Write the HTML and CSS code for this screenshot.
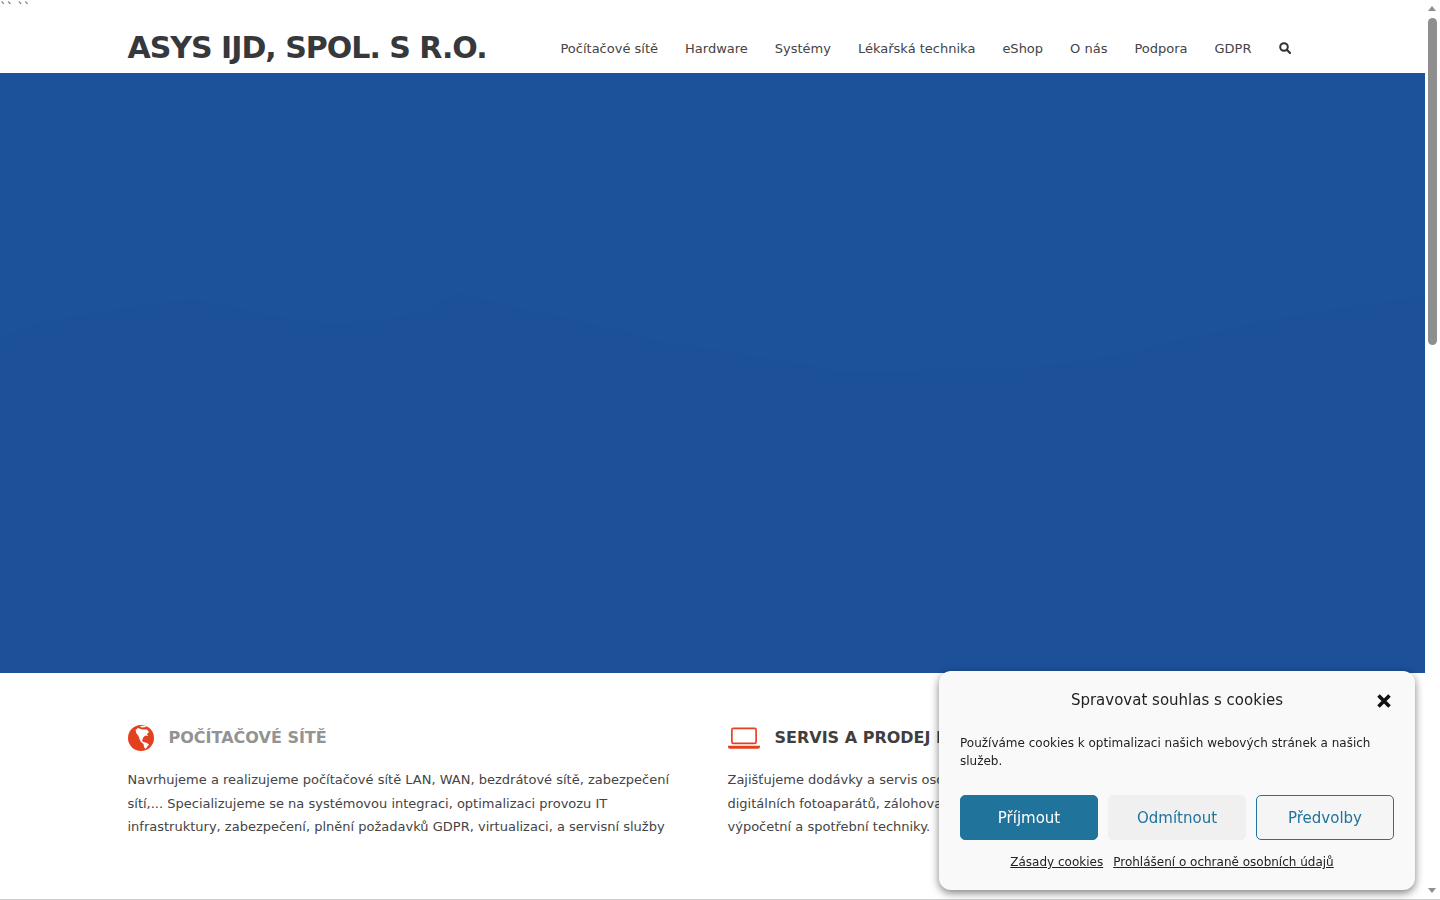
FILE: index.html
```html
<!DOCTYPE html>
<html lang="cs">
<head>
  <meta charset="UTF-8" />
  <title>ASYS IJD, spol. s r.o.</title>
  <link rel="stylesheet" href="styles.css">
</head>
<body>
<div class="page">
  <div class="stray">`` ``</div>
  <header class="site-header">
    <div class="header-inner">
      <a class="brand" href="#">ASYS IJD, SPOL. S R.O.</a>
      <nav class="main-nav">
        <a href="#">Počítačové sítě</a>
        <a href="#">Hardware</a>
        <a href="#">Systémy</a>
        <a href="#">Lékařská technika</a>
        <a href="#">eShop</a>
        <a href="#">O nás</a>
        <a href="#">Podpora</a>
        <a href="#">GDPR</a>
        <a href="#" class="search-link" aria-label="Hledat">
          <svg viewBox="0 0 12 12" width="12" height="12"><circle cx="5" cy="5" r="3.800" fill="none" stroke="#333" stroke-width="2"/><path d="M7.800 7.800 11 11" stroke="#333" stroke-width="2.200" stroke-linecap="round"/></svg>
        </a>
      </nav>
    </div>
  </header>

  <section class="hero">
    <svg class="hero-art" viewBox="0 0 1425 600" preserveAspectRatio="none">
      <path class="ridge" d="M0 268 18 257 60 246 118 237 191 227 225 233 255 240 300 248 336 252 400 245 430 238 455 220 490 228 527 237 582 249 620 258 664 270 720 278 773 287 810 293 845 300 920 298 1000 297 1050 293 1090 287 1140 278 1182 267 1230 257 1273 247 1340 236 1425 224V600H0Z"/>
    </svg>
  </section>

  <section class="features">
    <article class="feature">
      <h3 class="feature-title muted">
        <svg class="feature-icon" viewBox="0 0 26 26" width="26" height="26">
          <circle cx="13" cy="13" r="13" fill="#e2401f"/>
          <path fill="#fff" d="M7.500 5 10 3 14 4.500 19 4.500 21 7 19 9 20 11 17.500 10.500 15.500 12 14.500 14.500 14 16 15.500 17 19 18 21 19.500 19 22 17.500 24 16 22 15.500 19 13 17 11.500 14 10.500 11 8.500 8.500ZM12 1 17 .8 18.500 2 13.500 2.500Z"/>
        </svg>
        POČÍTAČOVÉ SÍTĚ
      </h3>
      <p>Navrhujeme a realizujeme počítačové sítě LAN, WAN, bezdrátové sítě, zabezpečení sítí,... Specializujeme se na systémovou integraci, optimalizaci provozu IT infrastruktury, zabezpečení, plnění požadavků GDPR, virtualizaci, a servisní služby</p>
    </article>
    <article class="feature">
      <h3 class="feature-title">
        <svg class="feature-icon" viewBox="0 0 33 22" width="32" height="22">
          <rect x="4" y="1" width="25" height="15.500" rx="1.500" fill="none" stroke="#e2401f" stroke-width="1.700"/>
          <path fill="#e2401f" d="M0 19h33v1a2 2 0 0 1-2 2H2a2 2 0 0 1-2-2Z"/>
        </svg>
        SERVIS A PRODEJ HARDWARE
      </h3>
      <p>Zajišťujeme dodávky a servis osobních počítačů, notebooků, tiskáren, monitorů, digitálních fotoaparátů, zálohovacích zařízení, serverů a další kancelářské a síťové výpočetní a spotřební techniky.</p>
    </article>
  </section>
</div>

<aside class="scrollbar">
  <span class="arrow-up"></span>
  <span class="thumb"></span>
  <span class="arrow-down"></span>
</aside>

<div class="cookie-box">
  <div class="cookie-head">
    <span class="cookie-title">Spravovat souhlas s cookies</span>
    <button class="cookie-close" aria-label="Zavřít">
      <svg viewBox="0 0 16 16" width="16" height="16"><path d="M2.500 2.500 13.500 13.500M13.500 2.500 2.500 13.500" stroke="#111" stroke-width="3.600"/></svg>
    </button>
  </div>
  <p class="cookie-text">Používáme cookies k optimalizaci našich webových stránek a našich služeb.</p>
  <div class="cookie-buttons">
    <button class="btn btn-accept">Příjmout</button>
    <button class="btn btn-deny">Odmítnout</button>
    <button class="btn btn-prefs">Předvolby</button>
  </div>
  <div class="cookie-links">
    <a href="#">Zásady cookies</a>
    <a href="#">Prohlášení o ochraně osobních údajů</a>
  </div>
</div>
</body>
</html>
```

FILE: styles.css
```css
body {
  margin: 0;
  height: 900px;
  box-sizing: border-box;
  border-bottom: 1px solid #ccc;
  overflow: hidden;
  display: flex;
  background: #fff;
  color: #444;
  font-family: "DejaVu Sans", sans-serif;
  font-size: 13px;
}
a { color: inherit; text-decoration: none; }

.page { width: 1425px; flex: none; }

.stray {
  height: 10px;
  font-size: 13px;
  line-height: 15px;
  color: #555;
}

.site-header { height: 63px; }
.header-inner {
  width: 1170px;
  margin: 0 auto;
  padding-top: 19px;
  display: flex;
  align-items: center;
  justify-content: space-between;
}
.brand {
  font-size: 30px;
  font-weight: bold;
  letter-spacing: -1px;
  line-height: 38px;
  color: #36383b;
}
.main-nav {
  display: flex;
  align-items: center;
  gap: 27px;
  padding-right: 7px;
}
.search-link { display: flex; }

.hero {
  height: 600px;
  background: #1b5299;
}
.hero-art { display: block; width: 100%; height: 100%; }
.ridge { fill: #1c5098; }

.features {
  width: 1170px;
  margin: 0 auto;
  padding-top: 51px;
  display: grid;
  grid-template-columns: 570px 570px;
  gap: 30px;
}
.feature-title {
  margin: 0 0 16px;
  display: flex;
  align-items: center;
  gap: 15px;
  font-size: 16px;
  line-height: 28px;
  color: #3f3f3f;
}
.feature-title.muted { color: #939393; }
.feature-icon { flex: none; }
.feature p {
  margin: 0;
  line-height: 23.500px;
}

.scrollbar {
  flex: 1;
  position: relative;
  background: #fff;
}
.thumb {
  position: absolute;
  left: 3px;
  top: 18px;
  width: 9px;
  height: 327px;
  border-radius: 5px;
  background: #8f8f8f;
}
.arrow-up, .arrow-down {
  position: absolute;
  left: 3px;
  width: 0;
  border-left: 4.500px solid transparent;
  border-right: 4.500px solid transparent;
}
.arrow-up { top: 6px; border-bottom: 5px solid #8f8f8f; }
.arrow-down { top: 888px; border-top: 5px solid #8f8f8f; }

.cookie-box {
  position: fixed;
  right: 25px;
  bottom: 10px;
  width: 476px;
  height: 219px;
  box-sizing: border-box;
  padding: 15px 21px 0;
  background: #f9f9f9;
  border-radius: 12px;
  box-shadow: 0 3px 8px 0 rgba(0,0,0,.5);
  color: #222;
}
.cookie-head {
  display: flex;
  justify-content: center;
  align-items: center;
  height: 28px;
  position: relative;
}
.cookie-title { font-size: 15px; }
.cookie-close {
  position: absolute;
  right: 2px;
  top: 7px;
  padding: 0;
  border: 0;
  background: none;
  display: flex;
}
.cookie-text {
  margin: 20px 0 0;
  font-size: 12px;
  line-height: 18px;
}
.cookie-buttons {
  margin-top: 25px;
  display: grid;
  grid-template-columns: repeat(3, 138px);
  gap: 10px;
}
.btn {
  height: 45px;
  border-radius: 5px;
  border: 1px solid #f0f0f0;
  background: #f0f0f0;
  color: #20739b;
  font: 15px "DejaVu Sans", sans-serif;
}
.btn-accept { background: #20739b; border-color: #20739b; color: #fff; }
.btn-prefs { border-color: #20739b; background: #f5f5f5; }
.cookie-links {
  margin-top: 13px;
  padding-right: 10px;
  display: flex;
  justify-content: center;
  gap: 10px;
  font-size: 12px;
  line-height: 18px;
}
.cookie-links a { text-decoration: underline; }
```
